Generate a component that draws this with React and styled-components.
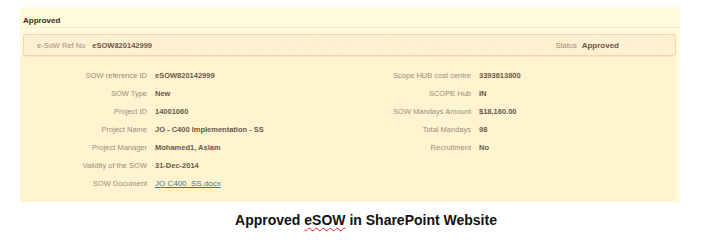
import React from 'react';
import styled, { createGlobalStyle } from 'styled-components';

const GlobalStyle = createGlobalStyle`
  body {
    margin: 0;
    background: #ffffff;
    font-family: "Liberation Sans", Arial, sans-serif;
  }
`;

const Page = styled.div`
  width: 708px;
  height: 240px;
  padding-top: 7px;
  box-sizing: border-box;
`;

const Panel = styled.div`
  margin-left: 20px;
  width: 660px;
  background: #fffbdc;
`;

const Header = styled.div`
  height: 21px;
  box-sizing: border-box;
  display: flex;
  align-items: flex-end;
  padding: 0 0 2px 3px;
  font-size: 8px;
  font-weight: bold;
  color: #3b2b1e;
  border-bottom: 1px solid #f6eecb;
`;

const RefBar = styled.div`
  margin: 6px 4px 0 3px;
  height: 20px;
  display: flex;
  align-items: center;
  padding: 0 56px 0 13px;
  border: 1px solid #f3d6ad;
  border-radius: 2px;
  box-shadow: 0 1px 1px rgba(230, 190, 140, 0.35);
  background: repeating-linear-gradient(
    -45deg,
    #fff3d4 0px,
    #fff3d4 2px,
    #fdecc9 2px,
    #fdecc9 3px
  );
  font-size: 7.5px;
`;

const RefLabel = styled.span`
  color: #9d8b7d;
  margin-right: ${(p) => p.gap || 8}px;
`;

const RefValue = styled.span`
  color: #6b584a;
  font-weight: bold;
  font-size: ${(p) => p.size || 7.5}px;
`;

const Spacer = styled.div`
  flex: 1;
`;

const Body = styled.div`
  margin-right: 4px;
  margin-top: 1px;
  background: #fff4cf;
  padding: 9px 0 10px;
  display: grid;
  grid-template-columns: 127px 180px 128px 1fr;
  column-gap: 8px;
  grid-auto-rows: 18px;
  font-size: 7.5px;
  align-items: center;
`;

const Label = styled.div`
  text-align: right;
  color: #9d8b7d;
  white-space: nowrap;
`;

const Value = styled.div`
  color: #6b584a;
  font-weight: bold;
  white-space: nowrap;
`;

const DocLink = styled.a`
  color: #2d7f9b;
  text-decoration: underline;
  font-weight: normal;
  font-size: 8px;
`;

const Caption = styled.div`
  text-align: center;
  margin-top: 10px;
  padding-left: 24px;
  font-size: 14px;
  font-weight: bold;
  color: #111111;
`;

const Misspelled = styled.span`
  text-decoration: underline wavy #e02020;
  text-decoration-thickness: 1px;
  text-underline-offset: 2px;
`;

const rows = [
  ['SOW reference ID', 'eSOW820142999', 'Scope HUB cost centre', '3393613800'],
  ['SOW Type', 'New', 'SCOPE Hub', 'IN'],
  ['Project ID', '14001060', 'SOW Mandays Amount', '$18,160.00'],
  ['Project Name', 'JO - C400 Implementation - SS', 'Total Mandays', '98'],
  ['Project Manager', 'Mohamed1, Aslam', 'Recruitment', 'No'],
  ['Validity of the SOW', '31-Dec-2014', '', ''],
  ['SOW Document', null, '', ''],
];

export default function App() {
  return (
    <Page>
      <GlobalStyle />
      <Panel>
        <Header>Approved</Header>
        <RefBar>
          <RefLabel gap={7}>e-SoW Ref No</RefLabel>
          <RefValue>eSOW820142999</RefValue>
          <Spacer />
          <RefLabel gap={5}>Status</RefLabel>
          <RefValue size={8}>Approved</RefValue>
        </RefBar>
        <Body>
          {rows.map(([l1, v1, l2, v2]) => (
            <React.Fragment key={l1}>
              <Label>{l1}</Label>
              <Value>
                {v1 === null ? <DocLink href="#">JO C400_SS.docx</DocLink> : v1}
              </Value>
              <Label>{l2}</Label>
              <Value>{v2}</Value>
            </React.Fragment>
          ))}
        </Body>
      </Panel>
      <Caption>
        Approved <Misspelled>eSOW</Misspelled> in SharePoint Website
      </Caption>
    </Page>
  );
}
